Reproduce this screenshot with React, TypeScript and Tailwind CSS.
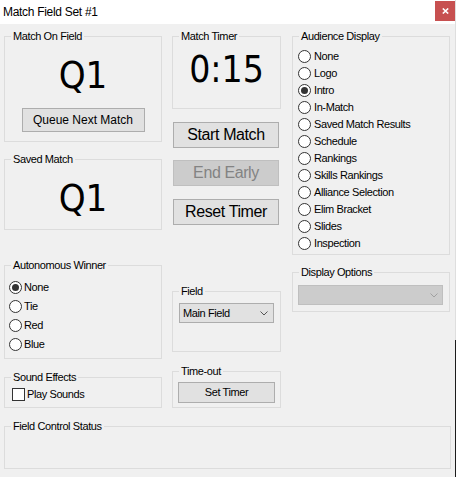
import React from 'react';

const ui = "font-['Liberation_Sans',Arial,sans-serif] text-black";
const big = "font-['DejaVu_Sans_Condensed','DejaVu_Sans',sans-serif] text-black";

const Group: React.FC<{ title: string; className?: string; children?: React.ReactNode }> = ({
  title,
  className = '',
  children,
}) => (
  <fieldset className={`min-w-0 border border-[#dcdcdc] ${className}`}>
    <legend className={`${ui} ml-[6px] px-[2px] text-[11px] leading-[13px] tracking-[-0.4px]`}>{title}</legend>
    {children}
  </fieldset>
);

const Radio: React.FC<{ label: string; checked?: boolean; rowClass: string; gap: string }> = ({
  label,
  checked,
  rowClass,
  gap,
}) => (
  <div className={`flex items-center ${rowClass}`}>
    <span className="flex h-[13px] w-[13px] shrink-0 items-center justify-center rounded-full border border-[#333333] bg-white">
      {checked && <span className="h-[7px] w-[7px] rounded-full bg-[#333333]" />}
    </span>
    <span className={`${ui} ${gap} text-[11px] leading-[13px] tracking-[-0.4px]`}>{label}</span>
  </div>
);

const Chevron: React.FC<{ color: string }> = ({ color }) => (
  <svg width="8" height="5" viewBox="0 0 8 5" fill="none">
    <polyline points="0.5,0.5 4,4 7.5,0.5" stroke={color} strokeWidth="1" />
  </svg>
);

const audience = [
  'None',
  'Logo',
  'Intro',
  'In-Match',
  'Saved Match Results',
  'Schedule',
  'Rankings',
  'Skills Rankings',
  'Alliance Selection',
  'Elim Bracket',
  'Slides',
  'Inspection',
];

const autoWinner = ['None', 'Tie', 'Red', 'Blue'];

const btn = 'flex items-center justify-center border border-[#adadad] bg-[#e1e1e1]';

export default function App() {
  return (
    <div className="flex h-[477px] w-[456px] bg-[#f0f0f0]">
      <div className="flex w-[455px] flex-col">
        {/* Title bar */}
        <div className="flex h-[24px] items-start justify-between bg-white">
          <span className={`${ui} ml-[3px] mt-[5px] text-[12px] leading-[14px] tracking-[-0.3px]`}>
            Match Field Set #1
          </span>
          <div className="mt-[1px] flex h-[20px] w-[20px] items-center justify-center bg-[#c75050]">
            <svg width="7" height="6" viewBox="0 0 7 6">
              <path d="M0.8 0.5 L6.2 5.5 M6.2 0.5 L0.8 5.5" stroke="#ffffff" strokeWidth="1.6" />
            </svg>
          </div>
        </div>

        {/* Body */}
        <div className="flex flex-col px-[4px]">
          <div className="flex">
            {/* Left column */}
            <div className="mt-[6px] flex w-[158px] flex-col">
              <Group title="Match On Field" className="h-[112px]">
                <div className={`${big} mt-[13px] text-center text-[38px] leading-[38px]`}>Q1</div>
                <button className={`${btn} mx-auto mt-[14px] h-[24px] w-[123px]`}>
                  <span className={`${ui} text-[12px] leading-[14px]`}>Queue Next Match</span>
                </button>
              </Group>

              <Group title="Saved Match" className="mt-[11px] h-[77px]">
                <div className={`${big} mt-[13px] text-center text-[38px] leading-[38px]`}>Q1</div>
              </Group>

              <Group title="Autonomous Winner" className="mt-[29px] h-[100px]">
                <div className="mt-[6px] flex flex-col pl-[4px]">
                  {autoWinner.map((w) => (
                    <Radio key={w} label={w} checked={w === 'None'} rowClass="h-[19px]" gap="ml-[2px]" />
                  ))}
                </div>
              </Group>

              <Group title="Sound Effects" className="mt-[12px] h-[37px]">
                <div className="mt-[4px] flex items-center pl-[7px]">
                  <span className="h-[13px] w-[13px] border border-[#333333] bg-white" />
                  <span className={`${ui} ml-[2px] text-[11px] leading-[13px] tracking-[-0.4px]`}>Play Sounds</span>
                </div>
              </Group>
            </div>

            {/* Middle column */}
            <div className="ml-[10px] mt-[6px] flex w-[109px] flex-col">
              <Group title="Match Timer" className="h-[79px]">
                <div className={`${big} mt-[8px] text-center text-[37px] leading-[37px]`}>0:15</div>
              </Group>

              <button className={`${btn} ml-[1px] mt-[13px] h-[26px] w-[106px]`}>
                <span className={`${ui} text-[16px] leading-[18px] tracking-[-0.4px]`}>Start Match</span>
              </button>
              <button className="ml-[1px] mt-[12px] flex h-[26px] w-[106px] items-center justify-center border border-[#bfbfbf] bg-[#cccccc]">
                <span className="font-['Liberation_Sans',Arial,sans-serif] text-[16px] leading-[18px] tracking-[-0.4px] text-[#838383]">
                  End Early
                </span>
              </button>
              <button className={`${btn} ml-[1px] mt-[13px] h-[26px] w-[106px]`}>
                <span className={`${ui} text-[16px] leading-[18px] tracking-[-0.4px]`}>Reset Timer</span>
              </button>

              <Group title="Field" className="mt-[60px] h-[67px]">
                <div className={`${btn} ml-[6px] mt-[5px] h-[20px] w-[95px] !justify-between pl-[3px] pr-[5px]`}>
                  <span className={`${ui} text-[11px] leading-[13px] tracking-[-0.4px]`}>Main Field</span>
                  <Chevron color="#555555" />
                </div>
              </Group>

              <Group title="Time-out" className="mt-[13px] h-[43px]">
                <button className={`${btn} ml-[5px] mt-[4px] h-[21px] w-[97px]`}>
                  <span className={`${ui} text-[11px] leading-[13px] tracking-[-0.4px]`}>Set Timer</span>
                </button>
              </Group>
            </div>

            {/* Right column */}
            <div className="ml-[11px] mt-[6px] flex w-[158px] flex-col">
              <Group title="Audience Display" className="h-[225px]">
                <div className="mt-[5px] flex flex-col pl-[5px]">
                  {audience.map((a) => (
                    <Radio key={a} label={a} checked={a === 'Intro'} rowClass="h-[17px]" gap="ml-[3px]" />
                  ))}
                </div>
              </Group>

              <Group title="Display Options" className="mt-[11px] h-[46px]">
                <div className="ml-[5px] mt-[6px] flex h-[20px] w-[145px] items-center justify-end border border-[#bfbfbf] bg-[#cccccc] pr-[4px]">
                  <Chevron color="#a0a0a0" />
                </div>
              </Group>
            </div>
          </div>

          <Group title="Field Control Status" className="mt-[12px] h-[49px] w-[447px]" />
        </div>
      </div>

      {/* sliver of desktop behind the window */}
      <div className="flex w-[1px] flex-col">
        <div className="h-[340px] bg-[#dedede]" />
        <div className="flex-1 bg-[#1c1c1c]" />
      </div>
    </div>
  );
}
